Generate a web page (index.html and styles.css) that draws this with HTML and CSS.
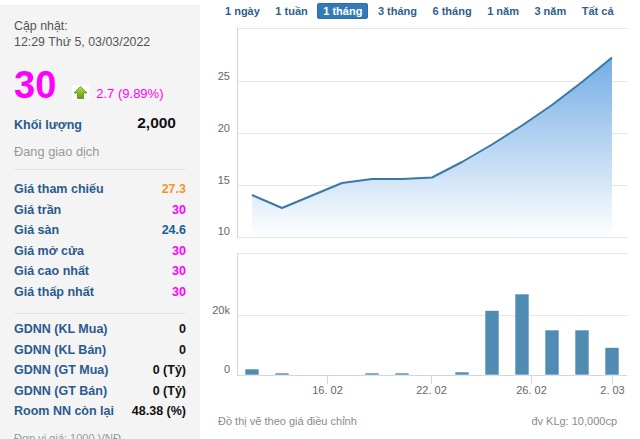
FILE: index.html
```html
<!DOCTYPE html>
<html lang="vi">
<head>
<meta charset="utf-8">
<title>Giá cổ phiếu</title>
<link rel="stylesheet" href="styles.css">
</head>
<body>
<div class="page">
  <aside class="info">
    <div class="upd">Cập nhật:<br>12:29 Thứ 5, 03/03/2022</div>
    <div class="price-row">
      <span class="price">30</span>
      <span class="arrow"><svg width="17" height="15" viewBox="0 0 17 15"><defs><linearGradient id="ag" x1="0" y1="0" x2="0" y2="1"><stop offset="0" stop-color="#b6e04a"/><stop offset="1" stop-color="#5e9e0e"/></linearGradient></defs><rect width="17" height="15" fill="#fff"/><path d="M8.5 1.5 L15 8 L11.5 8 L11.5 13.5 L5.5 13.5 L5.5 8 L2 8 Z" fill="url(#ag)" stroke="#5a8d1a" stroke-width="0.8" stroke-linejoin="round"/></svg></span>
      <span class="chg">2.7 (9.89%)</span>
    </div>
    <div class="vol-row"><span class="lbl">Khối lượng</span><span class="vol">2,000</span></div>
    <div class="status">Đang giao dịch</div>
    <ul class="rows first">
      <li><span class="lbl">Giá tham chiếu</span><span class="v ref">27.3</span></li>
      <li><span class="lbl">Giá trần</span><span class="v ceil">30</span></li>
      <li><span class="lbl">Giá sàn</span><span class="v floor">24.6</span></li>
      <li><span class="lbl">Giá mở cửa</span><span class="v ceil">30</span></li>
      <li><span class="lbl">Giá cao nhất</span><span class="v ceil">30</span></li>
      <li><span class="lbl">Giá thấp nhất</span><span class="v ceil">30</span></li>
    </ul>
    <ul class="rows second">
      <li><span class="lbl">GDNN (KL Mua)</span><span class="v">0</span></li>
      <li><span class="lbl">GDNN (KL Bán)</span><span class="v">0</span></li>
      <li><span class="lbl">GDNN (GT Mua)</span><span class="v">0 (Tỷ)</span></li>
      <li><span class="lbl">GDNN (GT Bán)</span><span class="v">0 (Tỷ)</span></li>
      <li><span class="lbl">Room NN còn lại</span><span class="v">48.38 (%)</span></li>
    </ul>
    <div class="unit">Đơn vị giá: 1000 VNĐ</div>
  </aside>
  <main class="chart">
    <nav class="tabs">
      <span class="tab">1 ngày</span>
      <span class="tab">1 tuần</span>
      <span class="tab active">1 tháng</span>
      <span class="tab">3 tháng</span>
      <span class="tab">6 tháng</span>
      <span class="tab">1 năm</span>
      <span class="tab">3 năm</span>
      <span class="tab">Tất cả</span>
    </nav>
    <svg class="plot" width="440" height="380" viewBox="200 19 440 380">
      <defs>
        <linearGradient id="area" gradientUnits="userSpaceOnUse" x1="0" y1="57" x2="0" y2="237">
          <stop offset="0" stop-color="#74ade6"/>
          <stop offset="1" stop-color="#ffffff"/>
        </linearGradient>
      </defs>
      <!-- price panel -->
      <g class="grid">
        <line x1="237" y1="28.5" x2="627" y2="28.5"/>
        <line x1="237" y1="81.5" x2="627" y2="81.5"/>
        <line x1="237" y1="133.5" x2="627" y2="133.5"/>
        <line x1="237" y1="185.5" x2="627" y2="185.5"/>
        <line x1="237" y1="237.5" x2="627" y2="237.5"/>
        <line x1="237" y1="253.5" x2="627" y2="253.5"/>
        <line x1="237" y1="315.5" x2="627" y2="315.5"/>
      </g>
      <g class="axis">
        <line x1="237.5" y1="28" x2="237.5" y2="238"/>
        <line x1="237.5" y1="253" x2="237.5" y2="376"/>
        <line x1="237" y1="375.5" x2="627" y2="375.5"/>
        <line x1="327.5" y1="375" x2="327.5" y2="384"/>
        <line x1="431.5" y1="375" x2="431.5" y2="384"/>
        <line x1="531.5" y1="375" x2="531.5" y2="384"/>
        <line x1="612.5" y1="375" x2="612.5" y2="384"/>
      </g>
      <path d="M252 237 L252 195 L282 208 L312 195.5 L342 183 L372 179 L402 179 L432 177.5 L462 162 L492 144.5 L522 125.5 L552 105 L582 82 L612 57.5 L612 237 Z" fill="url(#area)"/>
      <polyline class="line" points="252,195 282,208 312,195.5 342,183 372,179 402,179 432,177.5 462,162 492,144.5 522,125.5 552,105 582,82 612,57.5"/>
      <g class="ylab">
        <text x="230" y="80">25</text>
        <text x="230" y="132">20</text>
        <text x="230" y="184">15</text>
        <text x="230" y="235">10</text>
        <text x="230" y="314">20k</text>
        <text x="230" y="373">0</text>
      </g>
      <g class="bars">
        <rect x="245" y="369" width="14" height="6"/>
        <rect x="275" y="373" width="14" height="2"/>
        <rect x="365" y="373" width="14" height="2"/>
        <rect x="395" y="373" width="14" height="2"/>
        <rect x="455" y="372" width="14" height="3"/>
        <rect x="485" y="310.5" width="14" height="64.5"/>
        <rect x="515" y="294" width="14" height="81"/>
        <rect x="545" y="330" width="14" height="45"/>
        <rect x="575" y="330" width="14" height="45"/>
        <rect x="605" y="347.5" width="14" height="27.5"/>
      </g>
      <g class="xlab">
        <text x="327.5" y="394">16. 02</text>
        <text x="431.5" y="394">22. 02</text>
        <text x="531.5" y="394">26. 02</text>
        <text x="612.5" y="394">2. 03</text>
      </g>
    </svg>
    <div class="foot"><span>Đồ thị vẽ theo giá điều chỉnh</span><span>đv KLg: 10,000cp</span></div>
  </main>
</div>
</body>
</html>
```

FILE: styles.css
```css
* { box-sizing: border-box; }
html, body { margin: 0; padding: 0; background: #fff; }
body {
  font-family: "Liberation Sans", Arial, sans-serif;
  width: 640px;
  height: 439px;
  overflow: hidden;
}
.page {
  display: flex;
  align-items: flex-start;
}
.info {
  width: 200px;
  flex: none;
  margin-top: 5px;
  height: 434px;
  background: #f4f4f4;
  padding: 13px 14px 0 14px;
  color: #555;
}
.upd {
  font-size: 12.4px;
  line-height: 16px;
  color: #555;
}
.price-row {
  display: flex;
  align-items: baseline;
  margin-top: 16px;
  height: 38px;
}
.price {
  font-size: 38px;
  line-height: 38px;
  font-weight: bold;
  color: #ff00ff;
}
.arrow {
  display: inline-flex;
  margin-left: 16px;
  align-self: flex-end;
  margin-bottom: 4px;
}
.chg {
  margin-left: 7px;
  font-size: 13px;
  color: #ff00ff;
}
.vol-row {
  display: flex;
  justify-content: space-between;
  align-items: center;
  margin-top: 12px;
  padding-right: 10px;
  height: 18px;
}
.lbl {
  font-size: 12.5px;
  font-weight: bold;
  color: #2b5a8e;
}
.vol {
  font-size: 15.5px;
  font-weight: bold;
  color: #111;
  padding-bottom: 4px;
}
.status {
  margin-top: 9px;
  font-size: 12.8px;
  line-height: 18px;
  color: #999;
}
.rows {
  list-style: none;
  margin: 0;
  border-top: 1px solid #e6e6e6;
}
.rows li {
  display: flex;
  justify-content: space-between;
  align-items: center;
  height: 20.5px;
}
.rows.first {
  margin-top: 8px;
  padding: 9px 0 0 0;
}
.rows.second {
  margin-top: 11px;
  padding: 5px 0 0 0;
}
.v {
  font-size: 12.5px;
  font-weight: bold;
  color: #111;
}
.v.ref { color: #f7941d; }
.v.ceil { color: #ff00ff; }
.v.floor { color: #1f5c8c; }
.unit {
  margin-top: 9px;
  font-size: 11px;
  line-height: 14px;
  color: #999;
}
.chart {
  flex: 1;
  display: flex;
  flex-direction: column;
}
.tabs {
  display: flex;
  gap: 3.5px;
  margin-top: 3px;
  padding-left: 19px;
  height: 16px;
}
.tab {
  padding: 0 6px;
  font-size: 11px;
  line-height: 16px;
  font-weight: bold;
  color: #2f5e90;
  border-radius: 3px;
}
.tab.active {
  background: #337ab7;
  color: #fff;
  box-shadow: inset 0 0 0 1px #2e6da4;
}
.plot { display: block; }
.grid line { stroke: #e6e6e6; stroke-width: 1; }
.axis line { stroke: #ccd6eb; stroke-width: 1; }
.line { fill: none; stroke: #3a78a8; stroke-width: 2; stroke-linejoin: round; }
.bars rect { fill: #508bb2; stroke: #fff; stroke-width: 0.6; }
.ylab text {
  font-family: "Liberation Sans", Arial, sans-serif;
  font-size: 11px;
  fill: #666;
  text-anchor: end;
}
.xlab text {
  font-family: "Liberation Sans", Arial, sans-serif;
  font-size: 11px;
  fill: #666;
  text-anchor: middle;
}
.foot {
  display: flex;
  justify-content: space-between;
  margin-top: 15px;
  padding: 0 23px 0 18px;
  font-size: 11px;
  line-height: 14px;
  color: #8a8a8a;
}
```
